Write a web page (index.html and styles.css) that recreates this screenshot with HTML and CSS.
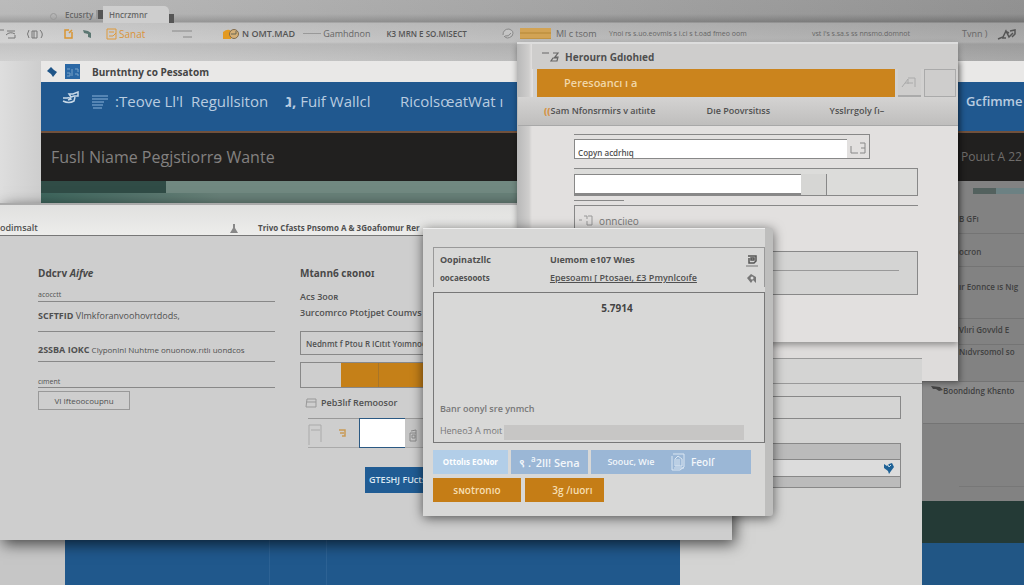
FILE: index.html
```html
<!DOCTYPE html>
<html lang="en">
<head>
<meta charset="utf-8">
<title>Burntntny co Pessatom</title>
<link rel="stylesheet" href="styles.css">
</head>
<body>
<div class="desktop">
  <header class="browser">
    <div class="tabs">
      <span class="tab-dot"></span>
      <span class="tab">Ecusrty</span>
      <span class="tab-mark"></span>
      <span class="tab tab-active">Hncrzmnr</span>
      <span class="tab-edge"></span>
    </div>
    <nav class="toolbar">
      <div class="tool-group tools-a">
        <svg width="46" height="14" viewBox="0 0 46 14"><g fill="none" stroke="#777"><path d="M0 3h4M7 4h8M6 8q4-4 9-1M8 11h7V8M29 3q-3 4 0 8M32 4h5v7h-5zM34 4v7M40 3q4 4 1 8"/></g></svg>
        <svg width="34" height="14" viewBox="0 0 34 14"><path d="M7 3H3v8h7V5M7 6l3-3" fill="none" stroke="#d99532" stroke-width="1.5"/><path d="M21 3l5 1 3 2v5l-3-1V7l-4-1z" fill="#5c7772"/></svg>
        <a class="tool-save" href="#"><svg width="11" height="12" viewBox="0 0 11 12"><path d="M1 1h9v10H1zM3 4h5M3 8h4l3-3" fill="none" stroke="#df9a3b"/></svg>Sanat</a>
        <svg class="menu-lines" width="21" height="10" viewBox="0 0 21 10"><path d="M0 2h20M11 8h9" stroke="#888" fill="none"/></svg>
      </div>
      <div class="tool-group tools-b">
        <a class="tool-strong" href="#"><svg width="18" height="12" viewBox="0 0 18 12"><path d="M1 4q5-4 8-1v8H1z" fill="#e39a22"/><circle cx="12" cy="6" r="4.500" fill="#d5b078" stroke="#806b4c"/><path d="M9 6h5V3" fill="none" stroke="#665"/></svg>N OMT.MAD</a>
        <a href="#"><span class="rule"></span>Gamhdnon</a>
        <a class="tool-strong" href="#">K3 MRN E SO.MISECT</a>
      </div>
      <div class="tool-group tools-c">
        <svg width="14" height="12" viewBox="0 0 14 12"><path d="M2 7q0-6 6-6 6 2 3 7-5 4-8 0M4 8q4 1 6-3" fill="#c5c5c5" stroke="#888"/></svg>
        <span class="tool-tag"></span>
        <a href="#">Ml c tsom</a>
      </div>
      <div class="tool-group tools-d"><a href="#">Ynoi rs s.uo.eovmls s i.ci s t.oad fmeo oom</a></div>
      <div class="tool-group tools-e"><a href="#">vst l's s.sa.s ss nnsmo.domnot</a></div>
      <div class="tool-group tools-f">
        <a href="#">Tvnn )</a>
        <svg width="20" height="14" viewBox="0 0 20 14"><path d="M1 12l5-2 3-6 3 6 4-4M13 4l5-1v4l-3 3M8 4l4 2M5 11h4" fill="none" stroke="#555" stroke-width="1.500"/></svg>
      </div>
    </nav>
  </header>

  <main class="site">
    <div class="site-title">
      <svg width="11" height="12" viewBox="0 0 11 12"><path d="M4 1l3 3 3 2-4 5-2-3-4-3z" fill="#1f5588"/></svg>
      <svg width="15" height="15" viewBox="0 0 15 15"><path d="M0 0h15v15H0z" fill="#2b68a5"/><path d="M2 5h3M2 9h3v3H2M7 5v7M10 5h3v3M10 10h3v2" fill="none" stroke="#7ba3c8"/></svg>
      <b>Burntntny co Pessatom</b>
    </div>
    <nav class="site-nav">
      <svg width="17" height="14" viewBox="0 0 17 14"><path d="M1 7h4q3-1 4 1l-3 1M1 10q6 3 11 0l1-4M7 3h4l5-2v4h-4L9 6z" fill="none" stroke="#c7d8e7" stroke-width="1.500"/></svg>
      <a class="nav-faded" href="#" aria-label="List"><svg width="18" height="16" viewBox="0 0 18 16"><path d="M1 2h16M1 5h16M1 8h12M1 11h11M2 14h9" fill="none" stroke="#5585b4" stroke-width="2"/></svg></a>
      <a class="nav-first" href="#">:Teove Ll'l</a>
      <a class="nav-second" href="#">Regullsiton</a>
      <a class="nav-third" href="#"><b>ג,</b> Fuif Wallcl</a>
      <a class="nav-fourth" href="#">RicolsœatWat ı</a>
      <a class="nav-last" href="#">Gcfimme</a>
    </nav>
    <div class="hero"><h1>Fusll Niame Pegjstiorrɘ Wante</h1><p>Pouut A 22</p></div>
    <div class="site-body">
      <div class="site-content"><div class="teal-a"></div><div class="teal-b"></div></div>
      <aside class="side">
        <div class="side-bar"></div>
        <a href="#">B GFı</a>
        <a href="#">ocron</a>
        <a class="side-tall" href="#">ır Eonnce ıs Nıg</a>
        <a href="#">Vlıri Govvld E</a>
        <a class="side-flat" href="#">Nıdvrsomol so</a>
        <a class="side-wide" href="#"><svg width="12" height="10" viewBox="0 0 12 10"><path d="M0 1l9 1 3 3-4 1-3-2H2z" fill="#444"/></svg>Boondıdng Khɛnto</a>
        <div class="side-gap"></div>
      </aside>
    </div>
    <div class="band-green"></div>
    <div class="band-blue"></div>
  </main>
  <div class="footer-band"></div>

  <div class="window win-rear"></div>

  <section class="window win-back">
    <div class="back-top"></div>
    <input class="back-input" aria-label="Reference">
    <div class="back-group">
      <div class="back-search"><input aria-label="Search"><svg width="10" height="12" viewBox="0 0 10 12"><path d="M0 2l3 2 2-2 3-1 2 4-3 4-2 3-1-3-4-3z" fill="#1d6196"/><path d="M4 3l1 2 2-2" fill="none" stroke="#c4dae7"/></svg></div>
    </div>
  </section>

  <section class="window win-left">
    <header><span>odimsalt</span><svg width="8" height="10" viewBox="0 0 8 10"><path d="M3 0h2v4l3 5H0l3-5z" fill="#888"/></svg><span class="left-caption">Trivo Cfasts Pnsomo A &amp; 3Goafıomur Rer</span></header>
    <div class="left-body">
      <div class="col-details">
        <h3>Ddcrv <i>Aifve</i></h3>
        <small>acocctt</small>
        <p><b>SCFTFID</b> Vlmkforanvoohovrtdods,</p>
        <p class="long"><b>2SSBA IOKC</b> Clyponlnl Nuhtme onuonow.rıtlı uondcos</p>
        <small class="lower">cıment</small>
        <button>VI Ifteoocoupnu</button>
      </div>
      <div class="col-project">
        <h3>Mtann6 cʀonoɪ</h3>
        <p>Acs 3ooʀ</p>
        <p>3urcomrco Ptotjpet Coumvs</p>
        <input class="project-input" value="Nednmt f Ptou R ICıtıt Yoımnoo" aria-label="Project">
        <div class="progress"><span></span><span></span></div>
        <label for="amount"><svg width="12" height="10" viewBox="0 0 12 10"><path d="M2 1h9v8H1zM1 4h10" fill="none" stroke="#999"/></svg>Peb3lıf Remoosor</label>
        <div class="cells">
          <span><svg width="42" height="22" viewBox="0 0 42 22"><path d="M1 21V1h12v17M3 6h9" fill="none" stroke="#aaa"/><path d="M31 6h6v6h-3M32 9h4" fill="none" stroke="#c99a55" stroke-width="1.500"/></svg></span>
          <input id="amount">
          <span class="cell-end"><svg width="9" height="13" viewBox="0 0 9 13"><path d="M2 2l5-1v11H1V4h6M3 6h3v3H3z" fill="none" stroke="#888"/></svg></span>
        </div>
        <button class="primary">GTESHJ FUcts</button>
      </div>
    </div>
  </section>

  <section class="window win-right">
    <h2><svg width="18" height="14" viewBox="0 0 18 14"><path d="M0 3h7M11 3h5l-3 4h3l-1 4h-6l2-3h4" fill="none" stroke="#666" stroke-width="1.200"/></svg>Herourn Gdıohıed</h2>
    <div class="right-search">
      <button class="orange-title">Peresoancı ı a</button>
      <button class="sq" aria-label="Chart"><svg width="16" height="14" viewBox="0 0 16 14"><path d="M1 12L7 4v5M7 3h7v9M4 8h8" fill="none" stroke="#aaa"/></svg></button>
      <button class="wide" aria-label="More"></button>
    </div>
    <nav class="right-tabs"><a href="#"><b>((</b>Sam Nfonsrmirs v aıtiıte</a><a href="#">Dıe Poovrsitıss</a><a href="#">Ysslrrgoly ſı–</a></nav>
    <div class="right-form">
      <div class="field-a"><input value="Copyn acdrhıq" aria-label="Category"><svg width="18" height="14" viewBox="0 0 18 14"><path d="M2 5v7h7M11 2h5v10h-5M12 7h4" fill="none" stroke="#888"/></svg></div>
      <div class="field-b"><input aria-label="Name"><span></span></div>
      <div class="short-rule"></div>
      <div class="field-c"><svg width="15" height="12" viewBox="0 0 15 12"><path d="M0 5h3M5 1h3v3M9 1h4v9H8V6" fill="none" stroke="#999"/></svg>onnciıeo</div>
      <div class="field-d"><div></div></div>
    </div>
  </section>

  <section class="window win-dialog">
    <div class="dialog-main">
      <header>
        <div><b>Oopinatzllc</b><b class="minor">oocaesooots</b></div>
        <div class="grow"><b>Uıemom e107 Wıes</b><a href="#">Epesoamı [ Ptosaeı, £3 Pmynlcoıfe</a></div>
        <div class="dialog-icons"><svg width="12" height="13" viewBox="0 0 12 13"><path d="M2 2h8v5l-2 2H3V4M5 4h3v2H5z" fill="none" stroke="#555" stroke-width="1.500"/><path d="M0 12h12" stroke="#777"/></svg><svg width="12" height="12" viewBox="0 0 12 12"><path d="M1 5l4-4 5 3v6l-3-3-2 3z" fill="#777"/><circle cx="6" cy="5" r="1.500" fill="#ddd"/></svg></div>
      </header>
      <div class="dialog-box">
        <h2>5.7914</h2>
        <p>Banr oonyl sre ynmch</p>
        <label>Heneo3 A moıt<input></label>
      </div>
      <div class="blue-buttons"><button class="pale">Ottolıs EONor</button><button>९ .<sup>a</sup>2ll! Sena</button><button class="joined"><span>Soouc, Wıe</span><span class="join-b"><svg width="15" height="19" viewBox="0 0 15 19"><path d="M2 1h11v13l-4 3H1V3M4 13V6l3-3 4 3v7zM6 13V6M8 6v7M3 15h10" fill="none" stroke="#dbe7f3"/></svg>Feolſ</span></button></div>
      <div class="orange-buttons"><button>sɴotronıo</button><button class="second">3g /ıuorı</button></div>
    </div>
  </section>
</div>
</body>
</html>
```

FILE: styles.css
```css
* { box-sizing: border-box; }
body { margin: 0; font-family: "Open Sans", "Noto Sans", "DejaVu Sans", sans-serif; font-size: 9px; line-height: 12px; color: #505050; }
h1, h2, h3, p { margin: 0; }
a { color: inherit; text-decoration: none; white-space: nowrap; }
button, input { font: inherit; color: inherit; margin: 0; border-radius: 0; min-width: 0; }
svg { flex: none; display: block; }
.desktop { position: relative; display: flex; flex-direction: column; min-height: 100vh; overflow: hidden; background: linear-gradient(90deg, #dedede, #cecece 40px, #bbb 60px); }

.browser { height: 61px; background: linear-gradient(90deg, rgba(255,255,255,.2), rgba(0,0,0,.14)), linear-gradient(#aaa 0, #a8a8a8 14px, #858585 22px, #bbb 23px, #c8c8c8 42px, #b5b5b5 44px, #c4c4c4 61px); }
.tabs { display: flex; align-items: flex-end; height: 23px; padding: 6px 0 0 50px; font-size: 8px; }
.tabs > * { height: 17px; padding-top: 3px; }
.tabs .tab-dot { width: 7px; height: 7px; padding: 0; margin: 0 8px 3px 0; border: 1px solid #999; border-radius: 50%; }
.tabs .tab { width: 31px; color: #666; font-weight: 600; }
.tabs .tab-mark { width: 7px; height: 9px; margin-bottom: 4px; background: #555; border-left: 2px solid #999; }
.tabs .tab-active { width: 66px; padding-left: 6px; background: #cecece; border-radius: 0 5px 0 0; }
.tabs .tab-edge { width: 5px; height: 9px; padding: 0; background: #555; }
.toolbar { display: flex; align-items: center; height: 21px; color: #666; }
.tool-group { display: flex; align-items: center; flex: none; }
.tool-group a { display: flex; align-items: center; gap: 2px; }
.tools-a { width: 222px; gap: 16px; }
.tools-a .tool-save { font-size: 10px; color: #d9943a; margin-left: -6px; }
.menu-lines { margin-left: 11px; }
.tools-b { width: 279px; gap: 8px; }
.tool-strong { font-weight: 600; color: #555; }
.tools-b a:last-child { margin-left: 8px; font-size: 8px; }
.rule { width: 18px; border-top: 1px solid #999; }
.tools-c { width: 108px; gap: 5px; }
.tool-tag { width: 31px; height: 11px; background: repeating-linear-gradient(#d2a354 0 4px, #c39544 4px 6px); }
.tools-d, .tools-e { font-size: 7px; }
.tools-d { width: 203px; }
.tools-e { width: 150px; }
.tools-f { gap: 10px; }

.site { display: flex; flex-direction: column; flex: 1; margin-left: 41px; min-height: 524px; }
.site-title { display: flex; align-items: center; gap: 7px; height: 21px; padding-left: 6px; background: #e9e8e7; }
.site-title b { margin-left: 5px; font-size: 10px; color: #454545; }
.site-nav { display: flex; align-items: flex-start; height: 51px; padding: 9px 0 0 21px; background: #20588f; border-bottom: 2px solid #70513d; color: #b9cce0; font-size: 15px; line-height: 20px; }
.nav-faded { margin: 3px 6px 0 12px; }
.nav-first { width: 76px; }
.nav-second { width: 94px; }
.nav-third { width: 115px; }
.nav-last { width: 58px; margin-left: auto; font-size: 13px; font-weight: 600; }
.hero { display: flex; align-items: center; justify-content: space-between; height: 48px; padding-left: 10px; background: #21201f; color: #838180; }
.hero h1 { font-size: 16px; line-height: 22px; font-weight: 400; }
.hero p { width: 63px; font-size: 12px; white-space: nowrap; color: #6f6d6b; }
.site-body { display: flex; flex: 1; }
.site-content { flex: 1; background: #5c756e; }
.teal-a { height: 12px; background: linear-gradient(90deg, #304c46 125px, #718981 125px); }
.teal-b { height: 12px; background: linear-gradient(90deg, #3e665d, #688179 180px); }
.side { display: flex; flex-direction: column; width: 103px; padding-left: 38px; background: #828282; color: #404040; font-weight: 600; font-size: 8px; }
.side a { height: 33px; padding-top: 12px; border-bottom: 1px solid #747474; }
.side-bar { height: 6px; margin: 7px 0 7px 14px; background: linear-gradient(90deg, #53615e 45%, #6c8183 45%); }
.side .side-tall { height: 52px; padding-top: 14px; }
.side a:nth-of-type(4) { height: 26px; padding-top: 5px; }
.side .side-flat { height: 37px; padding-top: 1px; }
.side .side-wide { display: flex; height: 42px; margin-left: -36px; padding: 3px 0 0 8px; background: #8a8a8a; }
.side-gap { height: 63px; border-bottom: 1px solid #777; }
.band-green { height: 42px; background: #243a36; }
.band-blue { height: 42px; background: #215685; }
.footer-band { position: absolute; top: 530px; bottom: 0; left: 0; width: 66.5%; background: linear-gradient(90deg, #c6c6c6 65px, #20588c 65px 269px, #2d6294 269px 270px, #20588c 270px 326px, #2d6294 326px 327px, #20588c 327px); }

.window { position: absolute; }
.win-rear { top: 60px; left: 52%; width: 41.6%; height: 321px; background: #dedcdb; box-shadow: 2px 2px 6px #0006; }
.win-back { top: 358px; bottom: 0; left: 66.4%; width: 23.6%; background: #d4d4d3; padding-right: 21px; }
.back-top { height: 26px; margin-right: -21px; border: solid #999; border-width: 1px 0; }
.back-input { display: block; width: 100%; height: 23px; margin: 12px 0 24px; background: transparent; border: 1px solid #888; }
.back-group { height: 45px; padding-top: 15px; background: #bbb; border: 1px solid #888; }
.back-search { display: flex; align-items: center; height: 18px; padding-right: 6px; background: #dcdcdc; border: solid #888; border-width: 1px 0; }
.back-search input { flex: 1; background: transparent; border: 0; }

.win-right { top: 42px; left: 50.5%; width: 43.1%; height: 300px; padding-left: 16px; background: linear-gradient(90deg, #b8b8b8, #cfcecd 12px, #e2e0df 15px); border-top: 2px solid #ddd; box-shadow: 0 3px 6px #0005; }
.win-right h2 { display: flex; align-items: center; gap: 5px; height: 25px; margin-left: -1px; padding-left: 10px; font-size: 10px; line-height: 14px; background: #cecdcc; color: #4f4f4f; }
.right-search { display: flex; gap: 3px; height: 28px; padding: 0 2px 0 4px; background: #d2d1d0; }
.right-search button { border: 1px solid #aaa; background: #cecdcc; padding: 3px; }
.right-search .orange-title { flex: 1; padding-left: 27px; text-align: left; font-size: 11px; font-weight: 600; background: #cb841d; border: 0; color: #f1d7a8; }
.right-search .sq { width: 23px; border-width: 0 0 2px; }
.right-search .wide { width: 32px; }
.right-tabs { display: grid; grid-template-columns: 38% 28% 34%; align-items: center; height: 29px; margin-left: -15px; padding-left: 26px; background: linear-gradient(#d4d3d2, #bfbebd); border-bottom: 1px solid #a8a8a8; font-size: 9px; font-weight: 600; }
.right-tabs b { color: #d69449; }
.right-tabs a:nth-child(2) { padding-left: 5px; }
.right-tabs a:nth-child(3) { padding-left: 12px; }
.right-form { padding: 8px 40px 0 41px; }
.field-a { display: flex; width: 86%; height: 25px; padding-top: 4px; border: 1px solid #888; border-left: 0; }
.field-a input { flex: 1; padding: 7px 3px 0; background: #fff; border: 1px solid #888; border-width: 1px 0 0 1px; font-size: 8px; font-weight: 600; }
.field-a svg { margin: 2px; }
.field-b { display: flex; height: 28px; margin-top: 9px; padding-top: 5px; background: #dcdcda; border: 1px solid #888; border-left: 0; }
.field-b input { flex: 1; background: #fff; border: 1px solid #888; border-width: 1px 0 2px 1px; }
.field-b span { width: 116px; background: linear-gradient(90deg, #d6d6d4 25px, #888 25px 26px, #dcdcda 26px); }
.short-rule { width: 50px; height: 5px; border-bottom: 1px solid #888; }
.field-c { display: flex; align-items: flex-start; gap: 5px; height: 36px; margin-top: 4px; padding: 9px 4px 0; border: solid #888; border-width: 1px 0 0 1px; font-size: 10px; color: #777; }
.field-d { height: 44px; margin-top: 10px; padding: 18px 18px 0 0; background: #d4d4d3; border: 1px solid #888; }
.field-d div { border-top: 1px solid #999; }

.win-left { top: 203px; left: 0; width: 71.5%; height: 337px; background: #cecece; border-top: 2px solid #aaa; box-shadow: 3px 4px 14px #000a; }
.win-left header { display: flex; align-items: flex-end; height: 31px; padding-bottom: 1px; background: linear-gradient(#e0e0df, #ededeb); border-bottom: 1px solid #777; font-size: 9px; font-weight: 600; }
.win-left header span:first-child { width: 230px; }
.win-left .left-caption { margin-left: 20px; font-size: 8px; font-weight: 700; white-space: nowrap; }
.left-body { display: flex; gap: 25px; padding: 31px 0 0 38px; }
.left-body h3 { height: 24px; font-size: 10px; line-height: 12px; color: #484848; }
.col-details { width: 237px; }
.col-details small { display: block; height: 11px; border-bottom: 1px solid #888; font-size: 7px; line-height: 8px; }
.col-details p { height: 30px; padding-top: 8px; border-bottom: 1px solid #888; font-size: 9px; white-space: nowrap; }
.col-details p.long { font-size: 8px; padding-top: 12px; }
.long b { font-size: 9px; }
.col-details .lower { height: 26px; padding-top: 16px; }
.col-details button { width: 92px; height: 19px; margin-top: 3px; padding: 0; border: 1px solid #999; background: transparent; font-size: 8px; }
.col-project { flex: 1; display: flex; flex-direction: column; font-weight: 600; }
.col-project p { height: 16px; font-size: 9px; }
.project-input { width: 200px; height: 24px; margin-top: 8px; padding: 0 5px; background: transparent; border: 1px solid #888; font-size: 8px; }
.progress { display: flex; width: 200px; height: 26px; margin-top: 7px; padding-left: 40px; border: 1px solid #888; }
.progress span { width: 38px; background: #c58018; border-right: 1px solid #a87528; }
.progress span:last-child { flex: 1; }
.col-project label { display: flex; align-items: center; gap: 4px; height: 30px; padding-left: 5px; font-size: 9px; }
.cells { display: flex; height: 30px; margin-left: 8px; border-bottom: 1px solid #aaa; }
.cells span { width: 51px; padding-top: 5px; border-top: 1px solid #999; }
.cells input { width: 46px; height: 30px; background: #fff; border: 1px solid #2b5983; border-right: 0; }
.cells .cell-end { padding: 10px 4px; background: #c5c5c5; }
.primary { width: 92px; height: 26px; margin: 19px 0 0 65px; padding: 0 4px; text-align: left; border: 0; background: #205c94; color: #dce8f2; font-size: 9px; font-weight: 600; white-space: nowrap; }

.win-dialog { top: 228px; left: 41.3%; width: 34.2%; height: 288px; padding-right: 8px; background: #bebebd; border-radius: 3px; box-shadow: 0 2px 12px #0009; }
.dialog-main { height: 288px; padding: 18px 0 0 10px; background: #d8d8d7; border-top: 1px solid #eee; }
.dialog-main header { display: flex; height: 40px; padding: 6px 4px 0 6px; border: 1px solid #999; border-bottom: 0; font-size: 9px; }
.dialog-main header > div { display: flex; flex-direction: column; gap: 6px; width: 110px; }
.dialog-main header .grow { flex: 1; }
.dialog-main header a { font-weight: 600; text-decoration: underline; }
.dialog-main .minor { font-size: 8px; }
.dialog-main header .dialog-icons { width: 14px; }
.dialog-box { display: flex; flex-direction: column; height: 151px; margin-top: 5px; border: 1px solid #777; padding: 9px 20px 0 6px; }
.dialog-box h2 { flex: 1; text-align: center; font-size: 10px; line-height: 12px; color: #444; padding-left: 50px; }
.dialog-box p { height: 22px; color: #777; font-size: 9px; font-weight: 600; }
.dialog-box label { display: flex; gap: 2px; color: #777; white-space: nowrap; height: 17px; }
.dialog-box input { flex: 1; background: #c7c6c5; border: 0; height: 15px; }
.blue-buttons, .orange-buttons { display: flex; gap: 3px; padding-right: 14px; }
.blue-buttons { height: 24px; margin-top: 7px; }
.blue-buttons button { width: 77px; padding: 0; border: 0; background: #9bb7d6; color: #f2f6fa; font-size: 11px; font-weight: 600; }
.blue-buttons sup { font-size: 8px; line-height: 8px; }
.blue-buttons .pale { width: 75px; background: #b2cee8; font-size: 8px; font-weight: 700; color: #fff; }
.blue-buttons .joined { display: flex; align-items: center; flex: 1; font-size: 9px; }
.joined > span { flex: 1; }
.joined .join-b { display: flex; align-items: center; gap: 5px; font-size: 10px; }
.orange-buttons { height: 24px; margin-top: 4px; gap: 4px; }
.orange-buttons button { width: 88px; padding: 0; border: 0; background: #c57d16; color: #f6dfb2; font-size: 10px; font-weight: 600; }
.orange-buttons .second { width: 79px; padding-left: 16px; }
```
